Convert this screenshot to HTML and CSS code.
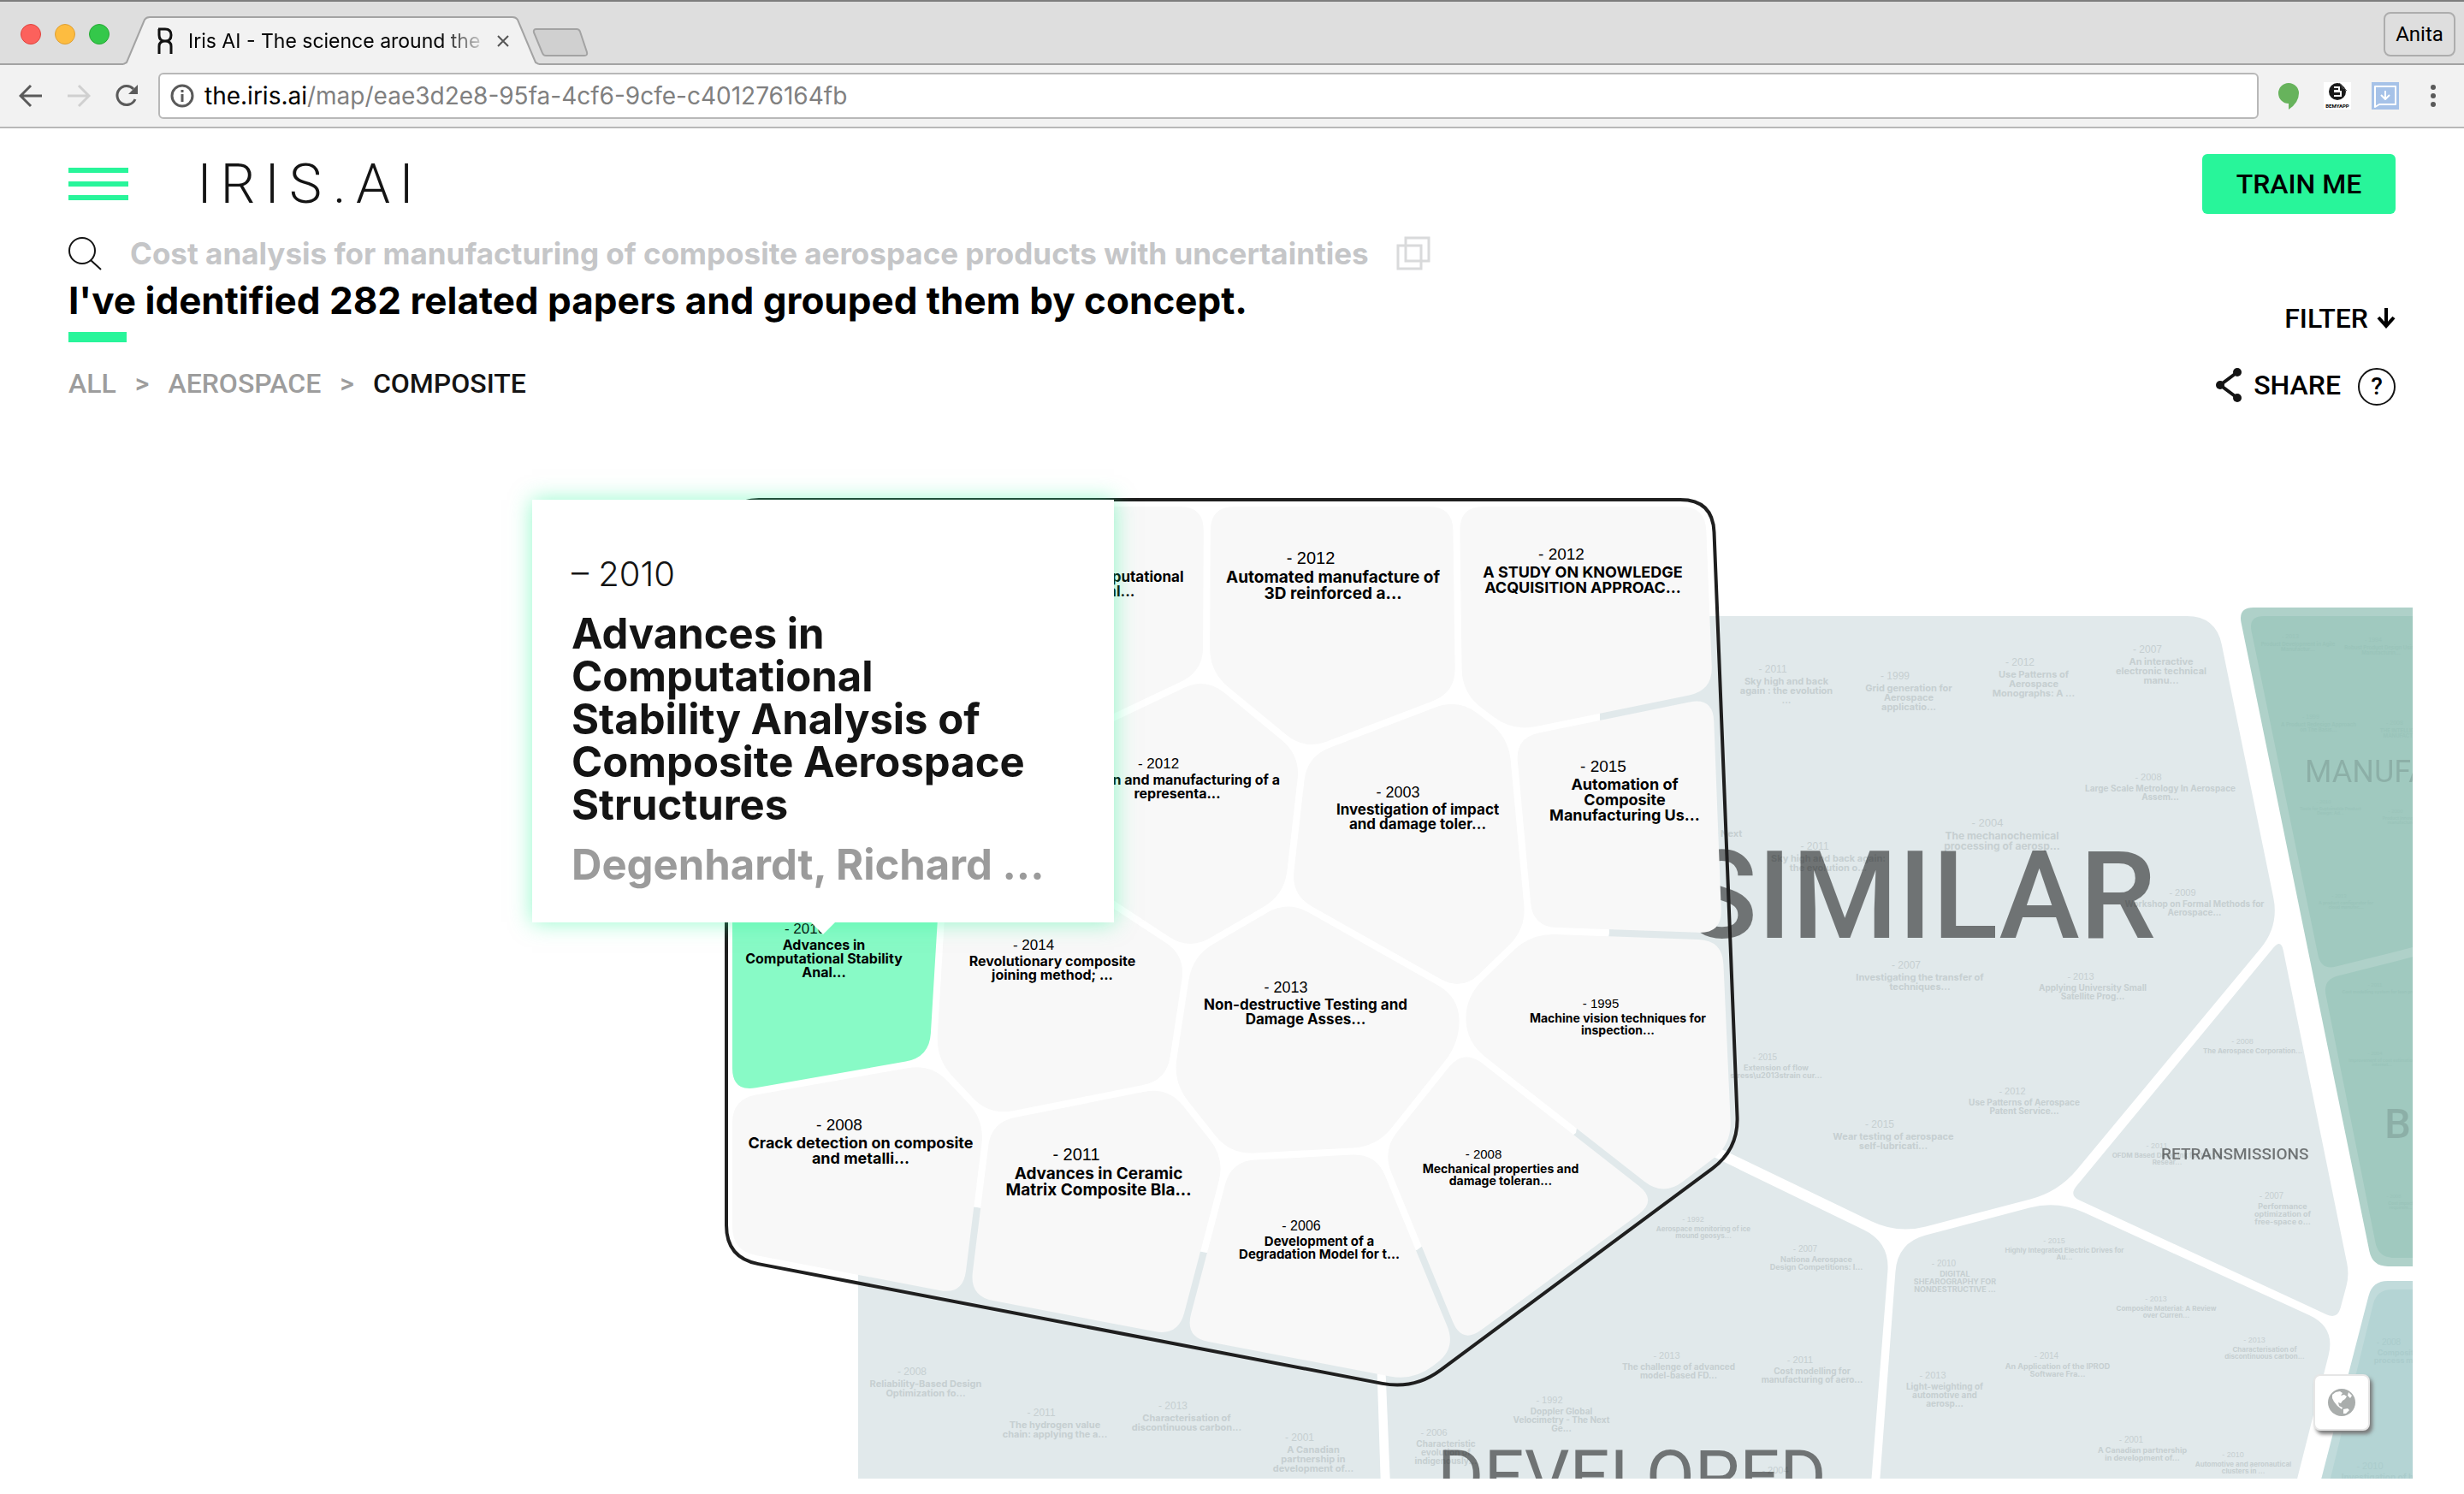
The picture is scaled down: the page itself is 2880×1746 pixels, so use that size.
FILE: index.html
```html
<!DOCTYPE html>
<html lang="en">
<head>
  <meta charset="UTF-8" />
  <meta name="viewport" content="width=device-width, initial-scale=1" />
  <title>Iris AI - The science around the paper</title>
  <link rel="stylesheet" href="styles.css">
</head>
<body>
  <!-- Browser window -->
  <div class="browser">
    <div class="tab-strip">
      <div class="lights">
        <button class="light red" type="button" aria-label="Close"></button>
        <button class="light yellow" type="button" aria-label="Minimize"></button>
        <button class="light green" type="button" aria-label="Zoom"></button>
      </div>
      <div class="tab">
        <svg class="tab-shape" viewBox="0 0 486 57" preserveAspectRatio="none" aria-hidden="true">
          <path d="M0 56 L4 54 L25 4 Q27 1 31 1 H455 Q459 1 461 4 L482 54 L486 56 V57 H0 Z" fill="#f2f2f2" />
          <path d="M0 56 L4 54 L25 4 Q27 1 31 1 H455 Q459 1 461 4 L482 54 L486 56" fill="none" stroke="#a3a3a3" stroke-width="2" />
        </svg>
        <svg class="favicon" viewBox="0 0 18 32" aria-hidden="true">
          <path d="M2 31 V22 Q2 16 9 16 Q16 16 16 22 V31 M1 2 H9 Q16 2 16 9 Q16 16 9 16 Q2 16 2 9 V2" />
        </svg>
        <span class="tab-title">Iris AI - The science around the</span>
        <button class="tab-close" type="button" aria-label="Close tab">
          <svg viewBox="0 0 14 14"><path d="M1 1 L13 13 M13 1 L1 13" /></svg>
        </button>
      </div>
      <button class="new-tab" type="button" aria-label="New tab">
        <svg viewBox="0 0 66 34"><path d="M5 1 H52 Q55 1 56 4 L64 28 Q65 32 61 32 H16 Q13 32 12 29 L2 5 Q1 1 5 1 Z" /></svg>
      </button>
      <button class="profile" type="button">Anita</button>
    </div>
    <div class="toolbar">
      <button class="nav" type="button" aria-label="Back">
        <svg viewBox="0 0 28 28"><path d="M14 2 L2 14 L14 26 M2 14 H27" /></svg>
      </button>
      <button class="nav disabled" type="button" aria-label="Forward">
        <svg viewBox="0 0 28 28"><path d="M14 2 L26 14 L14 26 M26 14 H1" /></svg>
      </button>
      <button class="nav" type="button" aria-label="Reload">
        <svg viewBox="0 0 28 28"><path d="M24 18 A11 11 0 1 1 22 6" /><path class="solid" d="M27 1 V12 H16 Z" /></svg>
      </button>
      <label class="address">
        <svg class="info" viewBox="0 0 28 28"><circle cx="14" cy="14" r="12" /><path d="M14 12 V21 M14 7 V10" /></svg>
        <span class="host">the.iris.ai</span>
        <input class="path" type="text" value="/map/eae3d2e8-95fa-4cf6-9cfe-c401276164fb" aria-label="Address">
      </label>
      <div class="extensions">
        <svg viewBox="0 0 32 32" aria-hidden="true">
          <path d="M15 1 A12 12 0 0 0 15 25 V32 Q27 24 27 13 A12 12 0 0 0 15 1 Z" fill="#67b35c" />
        </svg>
        <svg viewBox="0 0 32 32" aria-hidden="true">
          <rect width="32" height="32" fill="#fff" />
          <circle cx="16" cy="11" r="10" fill="#1a1a1a" />
          <path d="M12 6 H18 V10 H12 M12 11 H20 V16 H12" fill="none" stroke="#fff" stroke-width="2" />
          <path d="M18 0 L28 10 L28 0 Z" fill="#fff" />
          <path d="M18 1 Q22 3 22 7 Q25 7 27 10" fill="none" stroke="#555" stroke-width="1" />
          <text x="16" y="30" class="ext-name">BEMYAPP</text>
        </svg>
        <svg viewBox="0 0 32 32" aria-hidden="true">
          <rect width="32" height="32" fill="#a6c2e8" />
          <path d="M4 5 H28 V26 H9 L4 29 Z M16 10 V20 M11 15 L16 20 L21 15" fill="none" stroke="#fff" stroke-width="2" stroke-linejoin="round" />
        </svg>
        <svg class="dots" viewBox="0 0 8 32" aria-hidden="true">
          <circle cx="4" cy="6" r="3" /><circle cx="4" cy="16" r="3" /><circle cx="4" cy="26" r="3" />
        </svg>
      </div>
    </div>
  </div>

  <!-- Iris page -->
  <header class="top">
    <button class="menu" type="button" aria-label="Menu"><span></span><span></span><span></span></button>
    <a class="logo" href="#" aria-label="IRIS.AI">
      <svg viewBox="0 0 260 64"><text y="54" x="5 44 84 123 163 202 241">IRIS.AI</text></svg>
    </a>
    <button class="train" type="button">TRAIN ME</button>
  </header>

  <section class="intro">
    <div class="intro-left">
      <div class="search">
        <svg class="search-icon" viewBox="0 0 40 40" aria-hidden="true">
          <circle cx="16" cy="17" r="15" /><path d="M26 28 L38 39" />
        </svg>
        <input class="query" type="text" size="70" value="Cost analysis for manufacturing of composite aerospace products with uncertainties" aria-label="Research question">
        <button class="copy" type="button" aria-label="Copy">
          <svg viewBox="0 0 40 40"><path d="M11 2 H38 V29 H11 Z M2 11 H29 V38 H2 Z" /></svg>
        </button>
      </div>
      <h1>I've identified 282 related papers and grouped them by concept.</h1>
      <div class="accent"></div>
      <nav class="crumbs">
        <a href="#">ALL</a><span>&gt;</span><a href="#">AEROSPACE</a><span>&gt;</span><a class="current" href="#">COMPOSITE</a>
      </nav>
    </div>
    <div class="intro-right">
      <button class="filter" type="button">FILTER
        <svg viewBox="0 0 22 24"><path d="M11 0 V22 M2 11 L11 21 L20 11" /></svg>
      </button>
      <div class="share-row">
        <button class="share" type="button">
          <svg viewBox="0 0 30 40"><path d="M25 5 L5 20 L25 35" /><circle cx="5" cy="20" r="5" /><circle cx="25" cy="5" r="5" /><circle cx="25" cy="35" r="5" /></svg>
          SHARE
        </button>
        <button class="help" type="button" aria-label="Help">?</button>
      </div>
    </div>
  </section>

  <main class="map">
    <svg class="canvas" viewBox="0 500 2820 1228">
      <g id="regions"></g>
      <g id="faded"></g>
      <g class="topics">
        <text class="similar" x="1968" y="1096">SIMILAR</text>
        <text class="developed" x="1680" y="1754">DEVELOPED</text>
        <text class="retrans" x="2526" y="1355">RETRANSMISSIONS</text>
        <text class="manufacturing" x="2694" y="914">MANUFACTURING</text>
        <text class="business" x="2787" y="1330">BUSINESS</text>
      </g>
      <path class="backing" d="M856 588 H1870 V840 L1881 1090 L1842 1324 L1656 1461 L1410 1464 L1142 1411 L856 1380 Z" />
      <g id="papers"></g>
      <g id="outline"></g>
      <g id="labels"></g>
      <foreignObject class="popup-holder" x="622" y="584" width="680" height="520">
        <article class="popup">
          <p class="popup-year">– 2010</p>
          <h2>Advances in<br>Computational<br>Stability Analysis of<br>Composite Aerospace<br>Structures</h2>
          <p class="popup-author">Degenhardt, Richard ...</p>
        </article>
      </foreignObject>
    </svg>
    <button class="globe" type="button" aria-label="Whole map">
      <svg viewBox="0 0 32 32">
        <circle cx="16" cy="16" r="16" />
        <path d="M5 7 L9 4 L14 3 L17 5 L15 8 L19 7 L22 9 L20 12 L17 14 L15 17 L12 16 L13 20 L17 22 L16 24 L11 20 L7 15 L5 11 Z M18 24 L23 23 L25 25 L21 29 L18 29 Z M24 4 L28 8 L26 11 L23 8 Z" />
      </svg>
    </button>
  </main>

  <script src="map.js"></script>
</body>
</html>
```
FILE: styles.css
```css
* {
  box-sizing: border-box;
}
html, body {
  margin: 0;
  padding: 0;
  background: #fff;
}
body {
  font-family: Roboto, "Liberation Sans", sans-serif;
  color: #000;
  overflow-x: hidden;
}
button {
  padding: 0;
  border: none;
  background: none;
  font: inherit;
  color: inherit;
  cursor: pointer;
}
a {
  color: inherit;
  text-decoration: none;
}
svg {
  display: block;
}

/* browser window */
.tab-strip {
  display: flex;
  align-items: center;
  height: 76px;
  padding: 0 10px 0 24px;
  background: #dedede;
  border-top: 2px solid #7d7d7d;
  border-bottom: 2px solid #a3a3a3;
}
.lights {
  display: flex;
  gap: 16px;
  margin-top: 4px;
  margin-right: 16px;
}
.light {
  width: 24px;
  height: 24px;
  border-radius: 50%;
}
.red {
  background: #fc615c;
  border: 1px solid #e0443e;
}
.yellow {
  background: #fdbc40;
  border: 1px solid #dea034;
}
.green {
  background: #34c84a;
  border: 1px solid #27aa35;
}
.tab {
  position: relative;
  display: flex;
  align-items: center;
  align-self: flex-end;
  width: 486px;
  height: 57px;
  margin-bottom: -2px;
  padding: 0 35px 0 40px;
}
.tab-shape {
  position: absolute;
  left: 0;
  top: 0;
  width: 100%;
  height: 100%;
}
.favicon {
  position: relative;
  width: 18px;
  height: 32px;
  fill: none;
  stroke: #111;
  stroke-width: 3;
}
.tab-title {
  position: relative;
  flex: 1;
  margin-left: 18px;
  font-family: Inter, sans-serif;
  font-size: 23px;
  white-space: nowrap;
  overflow: hidden;
  -webkit-mask-image: linear-gradient(90deg, #000 84%, transparent 100%);
  mask-image: linear-gradient(90deg, #000 84%, transparent 100%);
}
.tab-close {
  position: relative;
  margin-left: 10px;
}
.tab-close svg {
  width: 14px;
  height: 14px;
  stroke: #555;
  stroke-width: 2;
}
.new-tab svg {
  width: 66px;
  height: 34px;
  fill: #d0d0d0;
  stroke: #a3a3a3;
  stroke-width: 2;
}
.new-tab {
  margin-top: 24px;
  margin-left: -8px;
}
.profile {
  width: 84px;
  height: 52px;
  margin-left: auto;
  margin-top: 4px;
  border: 2px solid #adadad;
  border-radius: 8px;
  font-size: 24px;
}
.toolbar {
  display: flex;
  align-items: center;
  height: 74px;
  padding: 0 32px 0 22px;
  background: #f2f2f2;
  border-bottom: 2px solid #b8b8b8;
}
.nav {
  margin-right: 28px;
}
.nav svg {
  width: 28px;
  height: 28px;
  fill: none;
  stroke: #5a5a5a;
  stroke-width: 3;
}
.nav .solid {
  fill: #5a5a5a;
  stroke: none;
}
.nav.disabled svg {
  stroke: #d0d0d0;
}
.address {
  flex: 1;
  display: flex;
  align-items: center;
  height: 54px;
  margin-left: -5px;
  padding-left: 12px;
  background: #fff;
  border: 2px solid #b8b8b8;
  border-radius: 6px;
  font-family: Inter, sans-serif;
  font-size: 28px;
}
.info {
  width: 28px;
  height: 28px;
  margin-right: 12px;
  fill: none;
  stroke: #5a5a5a;
  stroke-width: 3;
}
.path {
  flex: 1;
  min-width: 0;
  padding: 0;
  border: none;
  outline: none;
  background: none;
  font: inherit;
  color: #808080;
}
.extensions {
  display: flex;
  align-items: center;
  gap: 24px;
  margin-left: 20px;
}
.extensions svg {
  width: 32px;
  height: 32px;
}
.extensions .dots {
  width: 8px;
  margin-left: 12px;
  fill: #5a5a5a;
}
.ext-name {
  font-size: 6px;
  font-weight: 700;
  text-anchor: middle;
}

/* page header */
.top {
  display: flex;
  align-items: center;
  padding: 30px 80px 0;
}
.menu {
  display: flex;
  flex-direction: column;
  gap: 10px;
  width: 70px;
}
.menu span {
  height: 6px;
  background: #28f59a;
}
.logo {
  margin-left: 84px;
}
.logo svg {
  width: 260px;
  height: 64px;
  overflow: visible;
  fill: #141414;
  font-size: 64px;
  font-weight: 300;
  text-anchor: middle;
}
.train {
  width: 226px;
  height: 70px;
  margin-left: auto;
  background: #28f59a;
  border-radius: 6px;
  font-size: 32px;
  font-weight: 500;
}
.intro {
  display: flex;
  justify-content: space-between;
  padding: 26px 80px;
}
.search {
  display: flex;
  align-items: center;
  height: 40px;
}
.search-icon {
  width: 40px;
  height: 40px;
  fill: none;
  stroke: #141414;
  stroke-width: 2;
}
.query {
  field-sizing: content;
  margin-left: 32px;
  padding: 0;
  border: none;
  outline: none;
  background: none;
  font-family: Inter, "Open Sans", sans-serif;
  font-size: 35px;
  font-weight: 700;
  color: #c5c6c8;
}
.copy {
  margin-left: 32px;
}
.copy svg {
  width: 40px;
  height: 40px;
  fill: none;
  stroke: #d9dadb;
  stroke-width: 3;
}
h1 {
  margin: 10px 0 0;
  font-family: Inter, "Open Sans", sans-serif;
  font-size: 44px;
  font-weight: 700;
  line-height: 50px;
}
.accent {
  width: 68px;
  height: 12px;
  margin-top: 12px;
  background: #28f59a;
}
.crumbs {
  display: flex;
  gap: 22px;
  margin-top: 28px;
  font-size: 32px;
  font-weight: 500;
  line-height: 40px;
  color: #9d9d9d;
}
.crumbs .current {
  color: #141414;
}
.intro-right {
  display: flex;
  flex-direction: column;
  align-items: flex-end;
  gap: 38px;
  padding-top: 76px;
  font-size: 32px;
  font-weight: 500;
  line-height: 40px;
}
.filter {
  display: flex;
  align-items: center;
  gap: 10px;
}
.filter svg {
  width: 22px;
  height: 24px;
  fill: none;
  stroke: #000;
  stroke-width: 4;
}
.share-row {
  display: flex;
  gap: 20px;
}
.share {
  display: flex;
  align-items: center;
  gap: 14px;
  height: 40px;
}
.share svg {
  width: 30px;
  height: 40px;
  fill: none;
  stroke: #141414;
  stroke-width: 4;
}
.share circle {
  fill: #141414;
  stroke: none;
}
.help {
  width: 44px;
  height: 44px;
  border: 2px solid #141414;
  border-radius: 50%;
  font-size: 28px;
  line-height: 40px;
}

/* paper map */
.map {
  position: relative;
  margin-right: 60px;
  padding-bottom: 18px;
}
.canvas {
  width: 100%;
  height: auto;
}
.region {
  fill: #e1e9eb;
}
.region.green-edge {
  fill: #afd1c9;
}
.region.green-fill {
  fill: #a0c9bf;
}
.region.teal-edge {
  fill: #c1dbdb;
}
.region.teal-fill {
  fill: #b4d4d4;
}
.backing {
  fill: #fff;
}
.paper {
  fill: #f8f8f8;
}
.paper.selected {
  fill: #88fac6;
}
.outline {
  fill: none;
  stroke: #1f1f1f;
  stroke-width: 4;
}
.label {
  text-anchor: middle;
}
.label .year {
  font-family: "Liberation Sans", Arial, sans-serif;
}
.label .name {
  font-family: Inter, "Open Sans", sans-serif;
  font-weight: 700;
}
#faded {
  fill: #c6cfd1;
}
#faded .on-green {
  fill: #9ac4ba;
}
#faded .on-teal {
  fill: #abcccc;
}
.topics {
  opacity: 0.5;
}
.similar {
  font-size: 142px;
  font-weight: 500;
}
.developed {
  font-size: 83px;
}
.retrans {
  font-size: 19px;
  font-weight: 500;
}
.manufacturing {
  font-size: 36px;
  fill-opacity: 0.25;
}
.business {
  font-size: 49px;
  font-weight: 500;
  fill-opacity: 0.25;
}
.popup-holder {
  overflow: visible;
}
.popup {
  position: relative;
  height: 494px;
  padding: 62px 46px 0;
  background: #fff;
  box-shadow: 0 0 24px rgba(40, 245, 154, 0.5);
  font-family: Inter, "Open Sans", sans-serif;
  color: #141414;
}
.popup::after {
  content: "";
  position: absolute;
  left: 326px;
  top: 494px;
  border: 14px solid transparent;
  border-top-color: #fff;
  border-bottom: none;
}
.popup p {
  margin: 0;
}
.popup .popup-year {
  font-size: 40px;
  font-weight: 300;
  line-height: 50px;
}
.popup h2 {
  margin: 20px 0;
  font-size: 49px;
  font-weight: 700;
  line-height: 50px;
}
.popup .popup-author {
  font-size: 49px;
  font-weight: 700;
  line-height: 50px;
  color: #9b9b9b;
}
.globe {
  position: absolute;
  right: 50px;
  bottom: 74px;
  display: flex;
  align-items: center;
  justify-content: center;
  width: 66px;
  height: 66px;
  background: #fff;
  border: 2px solid #e6e6e6;
  border-radius: 8px;
  box-shadow: 3px 4px 4px #7a7a7a;
}
.globe svg {
  width: 32px;
  height: 32px;
}
.globe circle {
  fill: #a9adac;
}
.globe path {
  fill: #fff;
}
```
FILE: map.js
```js
const NS = 'http://www.w3.org/2000/svg';

// class, corner radius, corners (clockwise)
const regions = [
  ['', 0, [[1003, 1300], [1600, 1300], [1614, 1740], [1003, 1740]]],
  ['', 34, [[1850, 720], [2590, 720], [2664, 1082], [2406, 1393], [2218, 1442], [1850, 1265]]],
  ['', 34, [[1612, 1420], [1842, 1274], [2209, 1452], [2185, 1760], [1626, 1760]]],
  ['', 34, [[2218, 1452], [2405, 1403], [2730, 1551], [2677, 1760], [2195, 1760]]],
  ['', 14, [[2666, 1097], [2746, 1490], [2732, 1542], [2418, 1397]]],
  ['green-edge', 18, [[2616, 710], [2900, 710], [2900, 1480], [2773, 1480]]],
  ['green-fill', 18, [[2628, 720], [2900, 720], [2900, 1087], [2713, 1134]]],
  ['green-fill', 18, [[2715, 1145], [2900, 1098], [2900, 1470], [2780, 1470]]],
  ['teal-edge', 18, [[2773, 1497], [2900, 1497], [2900, 1760], [2705, 1760]]],
  ['teal-fill', 18, [[2778, 1507], [2900, 1507], [2900, 1760], [2716, 1760]]]
];

const papers = [
  ['', [[1130, 588], [1411, 588], [1410, 787], [1250, 863], [1130, 800]]],
  ['', [[1411, 588], [1702, 588], [1705, 812], [1524, 881], [1410, 787]]],
  ['', [[1702, 588], [1997, 588], [2006, 810], [1767, 859], [1705, 812]]],
  ['', [[1410, 787], [1524, 881], [1505, 1048], [1390, 1115], [1230, 1010], [1250, 863]]],
  ['', [[1524, 881], [1705, 812], [1767, 859], [1788, 1087], [1709, 1163], [1505, 1048]]],
  ['', [[1767, 859], [2006, 810], [2017, 1095], [1788, 1087]]],
  ['', [[1505, 1048], [1709, 1163], [1710, 1220], [1611, 1344], [1436, 1353], [1367, 1266], [1390, 1115]]],
  ['', [[1788, 1087], [2017, 1095], [2028, 1340], [1944, 1403], [1710, 1220], [1709, 1163]]],
  ['', [[1710, 1220], [1944, 1403], [1707, 1577], [1611, 1344]]],
  ['', [[1436, 1353], [1611, 1344], [1707, 1577], [1653, 1618], [1380, 1566]]],
  ['selected', [[852, 1020], [1102, 1040], [1090, 1239], [852, 1281]]],
  ['', [[852, 1281], [1090, 1239], [1155, 1308], [1129, 1518], [852, 1465]]],
  ['', [[1102, 1040], [1230, 1010], [1390, 1115], [1367, 1266], [1155, 1308], [1090, 1239]]],
  ['', [[1155, 1308], [1367, 1266], [1436, 1353], [1380, 1566], [1129, 1518]]]
];

const outline = [[849, 584], [2002, 584], [2032, 1343], [1653, 1624], [849, 1470]];

// x, y of the year, size, year, title lines
const labels = [
  [1284, 660, 18, '2010', ['Tools for Computational', 'Material...']],
  [1558, 659, 20, '2012', ['Automated manufacture of', '3D reinforced a...']],
  [1850, 654, 19, '2012', ['A STUDY ON KNOWLEDGE', 'ACQUISITION APPROAC...']],
  [1376, 898, 17, '2012', ['Design and manufacturing of a', 'representa...']],
  [1657, 932, 18, '2003', ['Investigation of impact', 'and damage toler...']],
  [1899, 902, 19, '2015', ['Automation of', 'Composite', 'Manufacturing Us...']],
  [963, 1091, 17, '2010', ['Advances in', 'Computational Stability', 'Anal...']],
  [1230, 1110, 17, '2014', ['Revolutionary composite', 'joining method; ...']],
  [1526, 1160, 18, '2013', ['Non-destructive Testing and', 'Damage Asses...']],
  [1006, 1321, 19, '2008', ['Crack detection on composite', 'and metalli...']],
  [1284, 1356, 20, '2011', ['Advances in Ceramic', 'Matrix Composite Bla...']],
  [1542, 1438, 16, '2006', ['Development of a', 'Degradation Model for t...']],
  [1754, 1354, 15, '2008', ['Mechanical properties and', 'damage toleran...']],
  [1891, 1178, 15, '1995', ['Machine vision techniques for', 'inspection...']]
];

const faded = [
  [2088, 786, 12, '2011', ['Sky high and back', 'again : the evolution', '...']],
  [2231, 794, 12, '1999', ['Grid generation for', 'Aerospace', 'applicatio...']],
  [2377, 778, 12, '2012', ['Use Patterns of', 'Aerospace', 'Monographs: A ...']],
  [2526, 763, 12, '2007', ['An interactive', 'electronic technical', 'manu...']],
  [2525, 912, 11, '2008', ['Large Scale Metrology In Aerospace', 'Assem...']],
  [2340, 966, 13, '2004', ['The mechanochemical', 'processing of aerosp...']],
  [2012, 964, 12, '', ['The Next']],
  [2137, 993, 12, '2011', ['Sky high and back again:', 'the evolution o...']],
  [2565, 1047, 11, '2009', ['Workshop on Formal Methods for', 'Aerospace...']],
  [2244, 1132, 12, '2007', ['Investigating the transfer of', 'techniques...']],
  [2446, 1145, 11, '2013', ['Applying University Small', 'Satellite Prog...']],
  [2076, 1239, 10, '2015', ['Extension of flow', 'stress\\u2013strain cur...']],
  [2213, 1318, 12, '2015', ['Wear testing of aerospace', 'self-lubricati...']],
  [2366, 1279, 11, '2012', ['Use Patterns of Aerospace', 'Patent Service...']],
  [1991, 1428, 9, '1992', ['Aerospace monitoring of ice', 'mound geosys...']],
  [2123, 1463, 10, '2007', ['Nationa Aerospace', 'Design Competitions: I...']],
  [1962, 1588, 11, '2013', ['The challenge of advanced', 'model-based FD...']],
  [2118, 1593, 11, '2011', ['Cost modelling for', 'manufacturing of aero...']],
  [1825, 1640, 11, '1992', ['Doppler Global', 'Velocimetry - The Next', 'Ge...']],
  [1690, 1678, 11, '2006', ['Characteristic', 'evolution of', 'indigenously...']],
  [2089, 1722, 11, '2004', []],
  [1535, 1684, 12, '2001', ['A Canadian', 'partnership in', 'development of...']],
  [1082, 1607, 12, '2008', ['Reliability-Based Design', 'Optimization fo...']],
  [1233, 1655, 12, '2011', ['The hydrogen value', 'chain: applying the a...']],
  [1387, 1647, 12, '2013', ['Characterisation of', 'discontinuous carbon...']],
  [2633, 1220, 9, '2008', ['The Aerospace Corporation...']],
  [2533, 1342, 9, '2011', ['OFDM Based Data Link for the UE', 'Resear...']],
  [2668, 1401, 10, '2007', ['Performance', 'optimization of', 'free-space o...']],
  [2413, 1453, 9, '2015', ['Highly Integrated Electric Drives for', 'Au...']],
  [2285, 1480, 10, '2010', ['DIGITAL', 'SHEAROGRAPHY FOR', 'NONDESTRUCTIVE ...']],
  [2532, 1521, 9, '2013', ['Composite Material: A Review', 'over Curren...']],
  [2647, 1569, 9, '2013', ['Characterisation of', 'discontinuous carbon...']],
  [2405, 1588, 10, '2014', ['An Application of the IPROD', 'Software Fra...']],
  [2273, 1611, 11, '2013', ['Light-weighting of', 'automotive and', 'aerosp...']],
  [2504, 1686, 10, '2001', ['A Canadian partnership', 'in development of...']],
  [2622, 1703, 9, '2010', ['Automotive and aeronautical', 'clusters in ...']],
  [2686, 746, 7, '2013', ['Product Development in Agile', 'Manufactur...'], 'on-green'],
  [2783, 750, 7, '1994', ['Robust Product Design Using', 'Manufacturin...'], 'on-green'],
  [2710, 840, 7, '1999', ['A Product Redesign Approach', 'on The Basis...'], 'on-green'],
  [2808, 847, 7, '2008', ['THE INTELLIGENT', 'MANUFACTU...'], 'on-green'],
  [2724, 939, 6, '2010', ['Tools for Sustainable Product', 'Design: Ad...'], 'on-green'],
  [2808, 950, 6, '2000', ['Product Innovation', 'manufacturi...'], 'on-green'],
  [2742, 1049, 6, '2013', ['A product configurator for', 'cloud manufac...'], 'on-green'],
  [2784, 1153, 6, '2011', ['Cost modelling system for lean prod...'], 'on-green'],
  [2784, 1233, 6, '2004', ['Improvement of cost estimation', 'internal...'], 'on-green'],
  [2806, 1400, 6, '2008', ['Cost impact', 'requirem...'], 'on-green'],
  [2805, 1572, 10, '2008', ['Composites', 'process mo...'], 'on-teal'],
  [2784, 1717, 11, '2010', ['Investigation of h...'], 'on-teal']
];

// move every edge of a convex shape inwards
function inset(points, d) {
  const edges = points.map((p, i) => {
    const q = points[(i + 1) % points.length];
    const dx = q[0] - p[0], dy = q[1] - p[1], len = Math.hypot(dx, dy);
    return { x: p[0] - dy / len * d, y: p[1] + dx / len * d, dx, dy };
  });
  return edges.map((b, i) => {
    const a = edges[(i + edges.length - 1) % edges.length];
    const t = ((b.x - a.x) * b.dy - (b.y - a.y) * b.dx) / (a.dx * b.dy - a.dy * b.dx);
    return [a.x + a.dx * t, a.y + a.dy * t];
  });
}

function rounded(points, radius) {
  const n = points.length;
  const towards = (p, q) => {
    const len = Math.hypot(q[0] - p[0], q[1] - p[1]);
    const k = Math.min(radius, len / 2) / len;
    return [p[0] + (q[0] - p[0]) * k, p[1] + (q[1] - p[1]) * k];
  };
  return points.map((p, i) => {
    const from = towards(p, points[(i + n - 1) % n]);
    const to = towards(p, points[(i + 1) % n]);
    return `${i ? 'L' : 'M'}${from} Q${p} ${to}`;
  }).join(' ') + ' Z';
}

function add(parent, tag, attrs, text) {
  const el = document.createElementNS(NS, tag);
  for (const key in attrs) el.setAttribute(key, attrs[key]);
  if (text) el.textContent = text;
  parent.appendChild(el);
  return el;
}

function drawLabel(parent, [x, y, size, year, lines, cls = '']) {
  const text = add(parent, 'text', { class: 'label ' + cls });
  if (year) {
    add(text, 'tspan', { class: 'year', x: x - Math.round(size * 1.3), y, 'font-size': size }, '- ' + year);
  }
  const nameSize = size - 1;
  lines.forEach((line, i) => {
    add(text, 'tspan', { class: 'name', x, y: y + size + 2 + i * nameSize, 'font-size': nameSize }, line);
  });
}

const byId = id => document.getElementById(id);

regions.forEach(([cls, r, pts]) => add(byId('regions'), 'path', { class: 'region ' + cls, d: rounded(pts, r) }));
papers.forEach(([cls, pts]) => add(byId('papers'), 'path', { class: 'paper ' + cls, d: rounded(inset(pts, 4), 28) }));
add(byId('outline'), 'path', { class: 'outline', d: rounded(outline, 38) });
labels.forEach(l => drawLabel(byId('labels'), l));
faded.forEach(l => drawLabel(byId('faded'), l));
```
